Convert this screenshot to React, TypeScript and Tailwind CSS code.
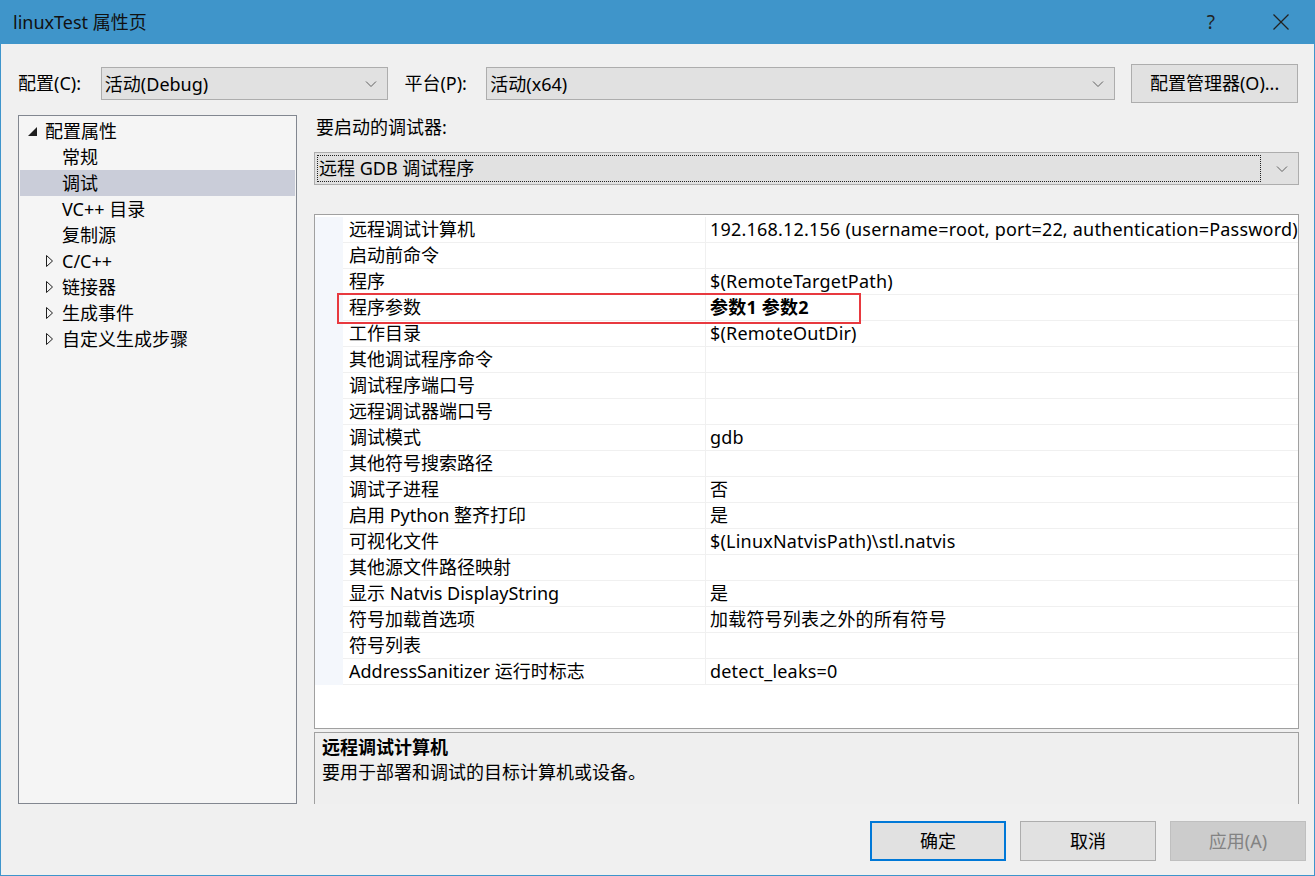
import React from 'react';

const font = "font-[family-name:'Noto_Sans','Noto_Sans_CJK_SC',sans-serif]";

type Row = { name: string; value?: string; bold?: boolean };

const rows: Row[] = [
  { name: '远程调试计算机', value: '192.168.12.156 (username=root, port=22, authentication=Password)' },
  { name: '启动前命令' },
  { name: '程序', value: '$(RemoteTargetPath)' },
  { name: '程序参数', value: '参数1 参数2', bold: true },
  { name: '工作目录', value: '$(RemoteOutDir)' },
  { name: '其他调试程序命令' },
  { name: '调试程序端口号' },
  { name: '远程调试器端口号' },
  { name: '调试模式', value: 'gdb' },
  { name: '其他符号搜索路径' },
  { name: '调试子进程', value: '否' },
  { name: '启用 Python 整齐打印', value: '是' },
  { name: '可视化文件', value: '$(LinuxNatvisPath)\\stl.natvis' },
  { name: '其他源文件路径映射' },
  { name: '显示 Natvis DisplayString', value: '是' },
  { name: '符号加载首选项', value: '加载符号列表之外的所有符号' },
  { name: '符号列表' },
  { name: 'AddressSanitizer 运行时标志', value: 'detect_leaks=0' },
];

const tree = [
  { label: '配置属性', level: 0, expanded: true },
  { label: '常规', level: 1 },
  { label: '调试', level: 1, selected: true },
  { label: 'VC++ 目录', level: 1 },
  { label: '复制源', level: 1 },
  { label: 'C/C++', level: 1, collapsed: true },
  { label: '链接器', level: 1, collapsed: true },
  { label: '生成事件', level: 1, collapsed: true },
  { label: '自定义生成步骤', level: 1, collapsed: true },
];

function Chevron() {
  return (
    <svg width="12" height="8" viewBox="0 0 12 8" className="shrink-0">
      <polyline points="1,1.5 6,6.5 11,1.5" fill="none" stroke="#606060" strokeWidth="1" />
    </svg>
  );
}

function Combo({ text, className }: { text: string; className: string }) {
  return (
    <div className={`h-[33px] flex items-center bg-[#e1e1e1] border border-[#adadad] pl-[3px] pr-[10px] ${className}`}>
      <span className="flex-1 text-[18px] leading-none">{text}</span>
      <Chevron />
    </div>
  );
}

export default function App() {
  return (
    <div className={`${font} w-[1315px] h-[876px] flex flex-col bg-[#f0f0f0] text-black border-x border-b border-[#3e95cc]`}>
      {/* title bar */}
      <div className="h-[44px] shrink-0 bg-[#3f95ca] flex items-center pl-[13px] pr-[26px] -mx-px">
        <span className="flex-1 text-[18px] text-[#111]">linuxTest 属性页</span>
        <span className="text-[19px] text-[#222] mr-[58px]">?</span>
        <svg width="16" height="16" viewBox="0 0 16 16">
          <line x1="0.5" y1="0.5" x2="15.5" y2="15.5" stroke="#222" strokeWidth="1.2" />
          <line x1="15.5" y1="0.5" x2="0.5" y2="15.5" stroke="#222" strokeWidth="1.2" />
        </svg>
      </div>

      {/* config row */}
      <div className="flex items-center mt-[20px] pl-[17px] pr-[16px] h-[39px]">
        <span className="text-[18px] w-[83px]">配置(C):</span>
        <Combo text="活动(Debug)" className="w-[288px]" />
        <span className="text-[18px] ml-[16px] w-[82px]">平台(P):</span>
        <Combo text="活动(x64)" className="w-[630px]" />
        <div className="ml-[16px] w-[167px] h-[39px] bg-[#e1e1e1] border border-[#adadad] flex items-center justify-center text-[18px]">
          配置管理器(O)...
        </div>
      </div>

      {/* main area */}
      <div className="flex mt-[12px] pl-[17px] h-[689px]">
        {/* tree */}
        <div className="w-[279px] border border-[#828790] bg-[#f5f5f5] pt-[2px] px-px">
          {tree.map((t) => (
            <div
              key={t.label}
              className={`h-[26px] flex items-center text-[18px] ${t.selected ? 'bg-[#cacdd9]' : ''}`}
            >
              {t.level === 0 ? (
                <>
                  <svg width="9" height="9" viewBox="0 0 9 9" className="ml-[8px] mr-[8px]">
                    <polygon points="9,0 9,9 0,9" fill="#1e1e1e" />
                  </svg>
                  <span>{t.label}</span>
                </>
              ) : (
                <>
                  <span className="w-[42px] flex justify-end pr-[9px]">
                    {t.collapsed && (
                      <svg width="7" height="12" viewBox="0 0 7 12">
                        <polygon points="0.5,0.5 6.5,6 0.5,11.5" fill="none" stroke="#1e1e1e" strokeWidth="1" />
                      </svg>
                    )}
                  </span>
                  <span>{t.label}</span>
                </>
              )}
            </div>
          ))}
        </div>

        {/* right column */}
        <div className="ml-[17px] w-[985px] flex flex-col">
          <div className="text-[18px] h-[26px] leading-[24px] pl-[2px]">要启动的调试器:</div>
          <div className="mt-[11px] h-[33px] bg-[#e1e1e1] border border-[#adadad] flex items-center p-[2px] pr-[10px]">
            <div className="flex-1 h-full border border-dotted border-[#222] flex items-center text-[18px] pl-px mr-[15px]">
              远程 GDB 调试程序
            </div>
            <Chevron />
          </div>

          {/* property grid */}
          <div className="relative mt-[29px] h-[515px] border border-[#a0a0a0] bg-white pt-[2px] overflow-hidden">
            {rows.map((r) => (
              <div key={r.name} className="flex h-[26px] text-[18px]">
                <div className="w-[28px] shrink-0 bg-[#f4f7fc]" />
                <div className="w-[363px] shrink-0 pl-[6px] flex items-center border-b border-[#f0f0f0] border-r whitespace-nowrap">
                  {r.name}
                </div>
                <div className={`flex-1 pl-[4px] flex items-center border-b border-[#f0f0f0] whitespace-nowrap overflow-hidden tracking-[0.2px] ${r.bold ? 'font-bold' : ''}`}>
                  {r.value ?? ''}
                </div>
              </div>
            ))}
            <div className="absolute left-[22px] top-[78px] w-[524px] h-[31px] border-2 border-[#e8393f]" />
          </div>

          {/* description */}
          <div className="mt-[3px] h-[72px] border-t border-x border-[#a0a0a0] bg-[#efefef] px-[7px] pt-[2px] text-[18px] leading-[25px]">
            <div className="font-bold">远程调试计算机</div>
            <div>要用于部署和调试的目标计算机或设备。</div>
          </div>
        </div>
      </div>

      {/* buttons */}
      <div className="flex justify-end gap-[14px] mt-[17px] pr-[8px]">
        <div className="w-[136px] h-[40px] border-2 border-[#0078d7] bg-[#e1e1e1] flex items-center justify-center text-[18px]">确定</div>
        <div className="w-[136px] h-[40px] border border-[#adadad] bg-[#e1e1e1] flex items-center justify-center text-[18px]">取消</div>
        <div className="w-[136px] h-[40px] border border-[#bfbfbf] bg-[#cccccc] flex items-center justify-center text-[18px] text-[#838383]">应用(A)</div>
      </div>
    </div>
  );
}
